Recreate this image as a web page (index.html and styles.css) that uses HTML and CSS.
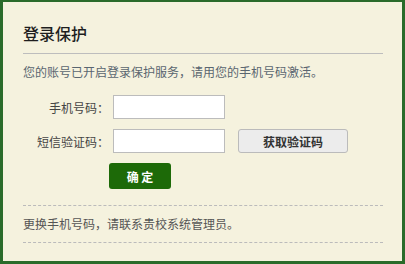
FILE: index.html
```html
<!DOCTYPE html>
<html lang="zh-CN">
<head>
    <meta charset="UTF-8">
    <title>登录保护</title>
    <link rel="stylesheet" href="styles.css">
</head>
<body>
    <div class="panel">
        <h2 class="title">登录保护</h2>
        <p class="notice">您的账号已开启登录保护服务，请用您的手机号码激活。</p>
        <form class="bind-form">
            <div class="form-row">
                <label for="phone">手机号码：</label>
                <input type="text" id="phone">
            </div>
            <div class="form-row">
                <label for="code">短信验证码：</label>
                <input type="text" id="code">
                <button type="button" class="btn-code">获取验证码</button>
            </div>
            <div class="form-row submit-row">
                <button type="submit" class="btn-ok">确 定</button>
            </div>
        </form>
        <p class="tip">更换手机号码，请联系贵校系统管理员。</p>
    </div>
</body>
</html>
```

FILE: styles.css
```css
html, body {
    margin: 0;
    padding: 0;
}

body {
    background-color: #2a6b2a;
    padding: 2px 3px 3px 3px;
    font-family: "Noto Sans CJK SC", "Noto Sans", sans-serif;
    font-size: 12px;
    color: #333;
}

.panel {
    background-color: #f5f2de;
    height: 259px;
    box-sizing: border-box;
    padding: 18px 19px 0 20px;
}

.title {
    margin: 0;
    font-size: 16px;
    font-weight: 500;
    color: #1e1e1e;
    line-height: 26px;
    padding-bottom: 7px;
    border-bottom: 1px solid #bdbdbd;
}

.notice {
    margin: 9px 0 0 0;
    line-height: 18px;
    color: #5a6670;
}

.bind-form {
    margin-top: 14px;
}

.form-row {
    display: flex;
    align-items: center;
    height: 24px;
    margin-bottom: 10px;
}

.form-row label {
    width: 86px;
    text-align: right;
    margin-right: 4px;
    color: #444;
}

.form-row input {
    width: 112px;
    height: 24px;
    box-sizing: border-box;
    border: 1px solid #bcbcbc;
    background-color: #fff;
    padding: 2px 4px;
    margin: 0;
}

.btn-code {
    margin-left: 13px;
    width: 110px;
    height: 24px;
    border: 1px solid #bbb;
    border-radius: 3px;
    background-color: #ececec;
    font-family: inherit;
    font-size: 12px;
    font-weight: bold;
    color: #333;
    cursor: pointer;
}

.submit-row {
    height: 26px;
    margin-bottom: 0;
    padding-left: 86px;
}

.btn-ok {
    width: 62px;
    height: 26px;
    border: none;
    border-radius: 3px;
    background-color: #1d6a08;
    color: #fff;
    font-family: inherit;
    font-size: 12px;
    font-weight: bold;
    cursor: pointer;
}

.tip {
    margin: 16px 0 0 0;
    border-top: 1px dashed #bbb;
    border-bottom: 1px dashed #bbb;
    line-height: 18px;
    padding: 9px 0 9px 0;
    color: #555;
}
```
